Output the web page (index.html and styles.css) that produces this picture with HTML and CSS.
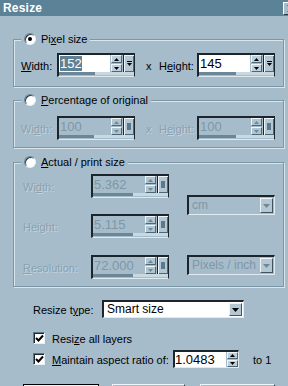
FILE: index.html
```html
<!DOCTYPE html>
<html>
<head>
<meta charset="utf-8">
<link rel="stylesheet" href="styles.css">
</head>
<body>
<div class="titlebar">
  <span class="title">Resize</span>
  <span class="close"><svg width="8" height="7" viewBox="0 0 8 7"><path d="M1 0L7 7M7 0L1 7" stroke="#000" stroke-width="1.5"/></svg></span>
</div>
<div class="content">
  <fieldset class="group g1">
    <legend class="legend"><span class="radio on"></span><span class="ltxt">Pi<u>x</u>el size</span></legend>
    <div class="pair">
      <span class="lbl lw"><u>W</u>idth:</span>
      <div class="spin">
        <div class="spin-top">
          <span class="val"><span class="sel">152</span></span>
          <span class="arrows"><span class="ab"><svg width="5" height="3"><polygon points="0,3 5,3 2.5,0" fill="#000"/></svg></span><span class="ab"><svg width="5" height="3"><polygon points="0,0 5,0 2.5,3" fill="#000"/></svg></span></span>
          <span class="dd"><svg width="5" height="6"><rect x="0" y="0" width="5" height="1" fill="#000"/><polygon points="0,2 5,2 2.5,5" fill="#000"/></svg></span>
        </div>
        <div class="slider"><span class="fill f1"></span></div>
      </div>
      <span class="xsep">x</span>
      <span class="lbl lh">H<u>e</u>ight:</span>
      <div class="spin">
        <div class="spin-top">
          <span class="val">145</span>
          <span class="arrows"><span class="ab"><svg width="5" height="3"><polygon points="0,3 5,3 2.5,0" fill="#000"/></svg></span><span class="ab"><svg width="5" height="3"><polygon points="0,0 5,0 2.5,3" fill="#000"/></svg></span></span>
          <span class="dd"><svg width="5" height="6"><rect x="0" y="0" width="5" height="1" fill="#000"/><polygon points="0,2 5,2 2.5,5" fill="#000"/></svg></span>
        </div>
        <div class="slider"><span class="fill f2"></span></div>
      </div>
    </div>
  </fieldset>

  <fieldset class="group g2">
    <legend class="legend"><span class="radio"></span><span class="ltxt"><u>P</u>ercentage of original</span></legend>
    <div class="pair">
      <span class="lbl lw dis">Wi<u>d</u>th:</span>
      <div class="spin off">
        <div class="spin-top">
          <span class="val">100</span>
          <span class="arrows"><span class="ab"><svg width="5" height="3"><polygon points="0,3 5,3 2.5,0" fill="#6f8897"/></svg></span><span class="ab"><svg width="5" height="3"><polygon points="0,0 5,0 2.5,3" fill="#6f8897"/></svg></span></span>
          <span class="dd"><span class="sq"></span></span>
        </div>
        <div class="slider"><span class="fill f3"></span></div>
      </div>
      <span class="xsep dis">x</span>
      <span class="lbl lh dis">H<u>e</u>ight:</span>
      <div class="spin off">
        <div class="spin-top">
          <span class="val">100</span>
          <span class="arrows"><span class="ab"><svg width="5" height="3"><polygon points="0,3 5,3 2.5,0" fill="#6f8897"/></svg></span><span class="ab"><svg width="5" height="3"><polygon points="0,0 5,0 2.5,3" fill="#6f8897"/></svg></span></span>
          <span class="dd"><span class="sq"></span></span>
        </div>
        <div class="slider"><span class="fill f2"></span></div>
      </div>
    </div>
  </fieldset>

  <fieldset class="group g3">
    <legend class="legend"><span class="radio"></span><span class="ltxt"><u>A</u>ctual / print size</span></legend>
    <div class="g3-body">
      <div class="g3-left">
        <div class="prow">
          <span class="lbl lp dis">Wi<u>d</u>th:</span>
          <div class="spin off">
            <div class="spin-top">
              <span class="val">5.362</span>
              <span class="arrows"><span class="ab"><svg width="5" height="3"><polygon points="0,3 5,3 2.5,0" fill="#6f8897"/></svg></span><span class="ab"><svg width="5" height="3"><polygon points="0,0 5,0 2.5,3" fill="#6f8897"/></svg></span></span>
              <span class="dd"><span class="sq"></span></span>
            </div>
            <div class="slider"><span class="fill f4"></span></div>
          </div>
        </div>
        <div class="prow r2">
          <span class="lbl lp dis">Height:</span>
          <div class="spin off">
            <div class="spin-top">
              <span class="val">5.115</span>
              <span class="arrows"><span class="ab"><svg width="5" height="3"><polygon points="0,3 5,3 2.5,0" fill="#6f8897"/></svg></span><span class="ab"><svg width="5" height="3"><polygon points="0,0 5,0 2.5,3" fill="#6f8897"/></svg></span></span>
              <span class="dd"><span class="sq"></span></span>
            </div>
            <div class="slider"><span class="fill f4"></span></div>
          </div>
        </div>
        <div class="prow r3">
          <span class="lbl lp dis"><u>R</u>esolution:</span>
          <div class="spin off">
            <div class="spin-top">
              <span class="val">72.000</span>
              <span class="arrows"><span class="ab"><svg width="5" height="3"><polygon points="0,3 5,3 2.5,0" fill="#6f8897"/></svg></span><span class="ab"><svg width="5" height="3"><polygon points="0,0 5,0 2.5,3" fill="#6f8897"/></svg></span></span>
              <span class="dd"><span class="sq"></span></span>
            </div>
            <div class="slider"><span class="fill f4"></span></div>
          </div>
        </div>
      </div>
      <div class="g3-right">
        <div class="combo off c1"><span class="ctxt">cm</span><span class="cbtn"><svg width="7" height="4"><polygon points="0,0 7,0 3.5,4" fill="#6f8897"/></svg></span></div>
        <div class="combo off c2"><span class="ctxt">Pixels / inch</span><span class="cbtn"><svg width="7" height="4"><polygon points="0,0 7,0 3.5,4" fill="#6f8897"/></svg></span></div>
      </div>
    </div>
  </fieldset>

  <div class="opt-row typerow">
    <span class="tlabel">Resize t<u>y</u>pe:</span>
    <div class="combo smart"><span class="ctxt">Smart size</span><span class="cbtn"><svg width="7" height="4"><polygon points="0,0 7,0 3.5,4" fill="#000"/></svg></span></div>
  </div>
  <div class="opt-row chk1">
    <span class="check"><svg width="9" height="9"><polyline points="1,4 3.5,6.5 8,1.5" fill="none" stroke="#000" stroke-width="2"/></svg></span>
    <span class="ctext">Resi<u>z</u>e all layers</span>
  </div>
  <div class="opt-row chk2">
    <span class="check"><svg width="9" height="9"><polyline points="1,4 3.5,6.5 8,1.5" fill="none" stroke="#000" stroke-width="2"/></svg></span>
    <span class="ctext mtext"><u>M</u>aintain aspect ratio of:</span>
    <div class="ratio"><span class="rval">1.0483</span><span class="arrows"><span class="ab"><svg width="5" height="3"><polygon points="0,3 5,3 2.5,0" fill="#000"/></svg></span><span class="ab"><svg width="5" height="3"><polygon points="0,0 5,0 2.5,3" fill="#000"/></svg></span></span></div>
    <span class="to1">to 1</span>
  </div>
  <div class="buttons">
    <span class="btn def"></span>
    <span class="btn b2"></span>
    <span class="btn b3"></span>
  </div>
</div>
</body>
</html>
```

FILE: styles.css
```css
html, body {
  margin: 0;
  padding: 0;
}
body {
  width: 288px;
  height: 386px;
  overflow: hidden;
  background: #a6bccb;
  font-family: "Liberation Sans", Arial, sans-serif;
  font-size: 11px;
  color: #000;
}
u { text-decoration: underline; text-underline-offset: 1px; }

.titlebar {
  height: 16px;
  background: #5b8296;
  display: flex;
  align-items: center;
  justify-content: space-between;
  padding-left: 3px;
}
.title {
  color: #fff;
  font-weight: bold;
  font-size: 12px;
  letter-spacing: 0.2px;
}
.close {
  width: 14px;
  height: 13px;
  margin-right: -9px;
  box-sizing: border-box;
  background: #a6bccb;
  border-top: 1px solid #fff;
  border-left: 1px solid #fff;
  border-bottom: 1px solid #2a3a44;
  display: flex;
  align-items: center;
  justify-content: center;
}

.content {
  padding-left: 13px;
}

.group {
  margin: 0;
  padding: 0;
  width: 271px;
  min-width: 0;
  box-sizing: border-box;
  border: 1px solid #7d96a5;
  box-shadow: inset 1px 1px 0 #d9e5eb, 1px 1px 0 #d9e5eb;
}
.g1 { margin-top: 17px; padding-bottom: 9px; }
.g2 { margin-top: 7px; padding-bottom: 7px; }
.g3 { margin-top: 8px; padding-bottom: 7px; }

.legend {
  margin-left: 7px;
  padding: 0 3px;
  height: 12px;
  background: #a6bccb;
  display: flex;
  align-items: center;
  line-height: 12px;
}
.ltxt { margin-left: 5px; }

.radio {
  width: 12px;
  height: 12px;
  box-sizing: border-box;
  border-radius: 50%;
  background: #fff;
  border: 1px solid;
  border-color: #6b8494 #e8f0f4 #e8f0f4 #6b8494;
  box-shadow: inset 1px 1px 0 #2a3a44;
  display: flex;
  align-items: center;
  justify-content: center;
}
.radio.on::after {
  content: "";
  width: 4px;
  height: 4px;
  border-radius: 50%;
  background: #000;
}

.pair {
  display: flex;
  align-items: center;
  padding-left: 7px;
}
.g1 .pair { margin-top: 8px; }
.g2 .pair { margin-top: 10px; }

.lbl { padding-top: 2px; }
.lw { width: 36px; }
.lh { width: 38px; }
.xsep { width: 13px; margin-left: 11px; padding-top: 2px; }
.dis {
  color: #8aa1b0;
  text-shadow: 1px 1px 0 #c4d4dd;
}

.spin {
  width: 78px;
  height: 24px;
  box-sizing: border-box;
  border-top: 2px solid #1b252b;
  border-left: 2px solid #1b252b;
  border-right: 1px solid #1b252b;
  border-bottom: 1px solid #dfe9ee;
  background: #a6bccb;
  display: flex;
  flex-direction: column;
}
.spin-top {
  display: flex;
  height: 17px;
}
.val {
  flex: 1;
  background: #fff;
  font-size: 13px;
  line-height: 17px;
  padding-left: 1px;
  overflow: hidden;
  white-space: nowrap;
}
.sel {
  background: #5f8195;
  color: #fff;
}
.off .val {
  background: #a6bccb;
  color: #7f97a6;
}
.arrows {
  width: 11px;
  display: flex;
  flex-direction: column;
  justify-content: space-between;
  padding: 0 0 0 1px;
}
.ab {
  height: 8px;
  box-sizing: border-box;
  background: #bccfda;
  border: 1px solid;
  border-color: #eef4f7 #4e6776 #4e6776 #eef4f7;
  display: flex;
  align-items: center;
  justify-content: center;
}
.off .ab { background: #b1c5d1; }
.dd {
  width: 11px;
  margin-left: 1px;
  box-sizing: border-box;
  border-left: 1px solid #1b252b;
  background: #b4c8d3;
  box-shadow: inset 1px 1px 0 #eef4f7, inset -1px -1px 0 #4e6776;
  display: flex;
  align-items: center;
  justify-content: center;
}
.sq {
  width: 4px;
  height: 7px;
  background: #587a8c;
}
.slider {
  height: 3px;
  background: #c9d9e1;
  display: flex;
}
.fill { background: #6b8797; height: 3px; }
.f1 { width: 36px; }
.f2 { width: 37px; }
.f3 { width: 35px; }
.f4 { width: 40px; }

.g3-body {
  display: flex;
  padding-left: 9px;
}
.g3-left {
  margin-top: 6px;
  display: flex;
  flex-direction: column;
}
.prow { display: flex; align-items: center; }
.r2 { margin-top: 16px; }
.r3 { margin-top: 17px; }
.lp { width: 68px; }
.g3-right {
  margin-left: 18px;
  display: flex;
  flex-direction: column;
}
.combo {
  display: flex;
  height: 20px;
  box-sizing: border-box;
  border-top: 2px solid #1b252b;
  border-left: 2px solid #1b252b;
  border-right: 1px solid #e0eaef;
  border-bottom: 1px solid #e0eaef;
  background: #fff;
}
.combo.off { background: #a6bccb; width: 88px; }
.c1 { margin-top: 27px; }
.c2 { margin-top: 40px; }
.ctxt {
  flex: 1;
  padding-left: 3px;
  line-height: 17px;
  font-size: 12px;
  white-space: nowrap;
  overflow: hidden;
}
.off .ctxt { color: #7f97a6; }
.cbtn {
  width: 13px;
  margin: 1px 1px 1px 0;
  box-sizing: border-box;
  background: #b4c8d3;
  border: 1px solid;
  border-color: #eef4f7 #3e5563 #3e5563 #eef4f7;
  display: flex;
  align-items: center;
  justify-content: center;
}

.opt-row {
  display: flex;
  align-items: center;
  padding-left: 20px;
}
.typerow { margin-top: 13px; }
.tlabel { width: 69px; padding-top: 2px; }
.smart { width: 142px; height: 18px; }
.smart .ctxt { line-height: 15px; }
.chk1 { margin-top: 14px; height: 12px; }
.chk2 { margin-top: 6px; }
.check {
  width: 12px;
  height: 12px;
  box-sizing: border-box;
  background: #fff;
  border: 1px solid;
  border-color: #5c7585 #e8f0f4 #e8f0f4 #5c7585;
  box-shadow: inset 1px 1px 0 #1b252b;
  display: flex;
  align-items: center;
  justify-content: center;
  padding: 1px 0 0 1px;
}
.ctext { margin-left: 7px; padding-top: 1px; }
.mtext { width: 121px; }
.ratio {
  width: 66px;
  height: 18px;
  box-sizing: border-box;
  border-top: 2px solid #1b252b;
  border-left: 2px solid #1b252b;
  border-right: 1px solid #e0eaef;
  border-bottom: 1px solid #e0eaef;
  background: #a6bccb;
  display: flex;
}
.rval {
  flex: 1;
  background: #fff;
  font-size: 13px;
  line-height: 15px;
}
.ratio .arrows { width: 11px; }
.ratio .ab { height: 7px; }
.to1 { margin-left: 14px; padding-top: 2px; }

.buttons {
  display: flex;
  margin-top: 16px;
  padding-left: 10px;
}
.btn {
  height: 23px;
  box-sizing: border-box;
  background: #a6bccb;
  border: 1px solid;
  border-color: #eef4f7 #2a3a44 #2a3a44 #eef4f7;
}
.btn.def { width: 76px; border: 1px solid #000; box-shadow: inset 1px 1px 0 #eef4f7; }
.b2 { width: 73px; margin-left: 13px; }
.b3 { width: 75px; margin-left: 15px; }
```
